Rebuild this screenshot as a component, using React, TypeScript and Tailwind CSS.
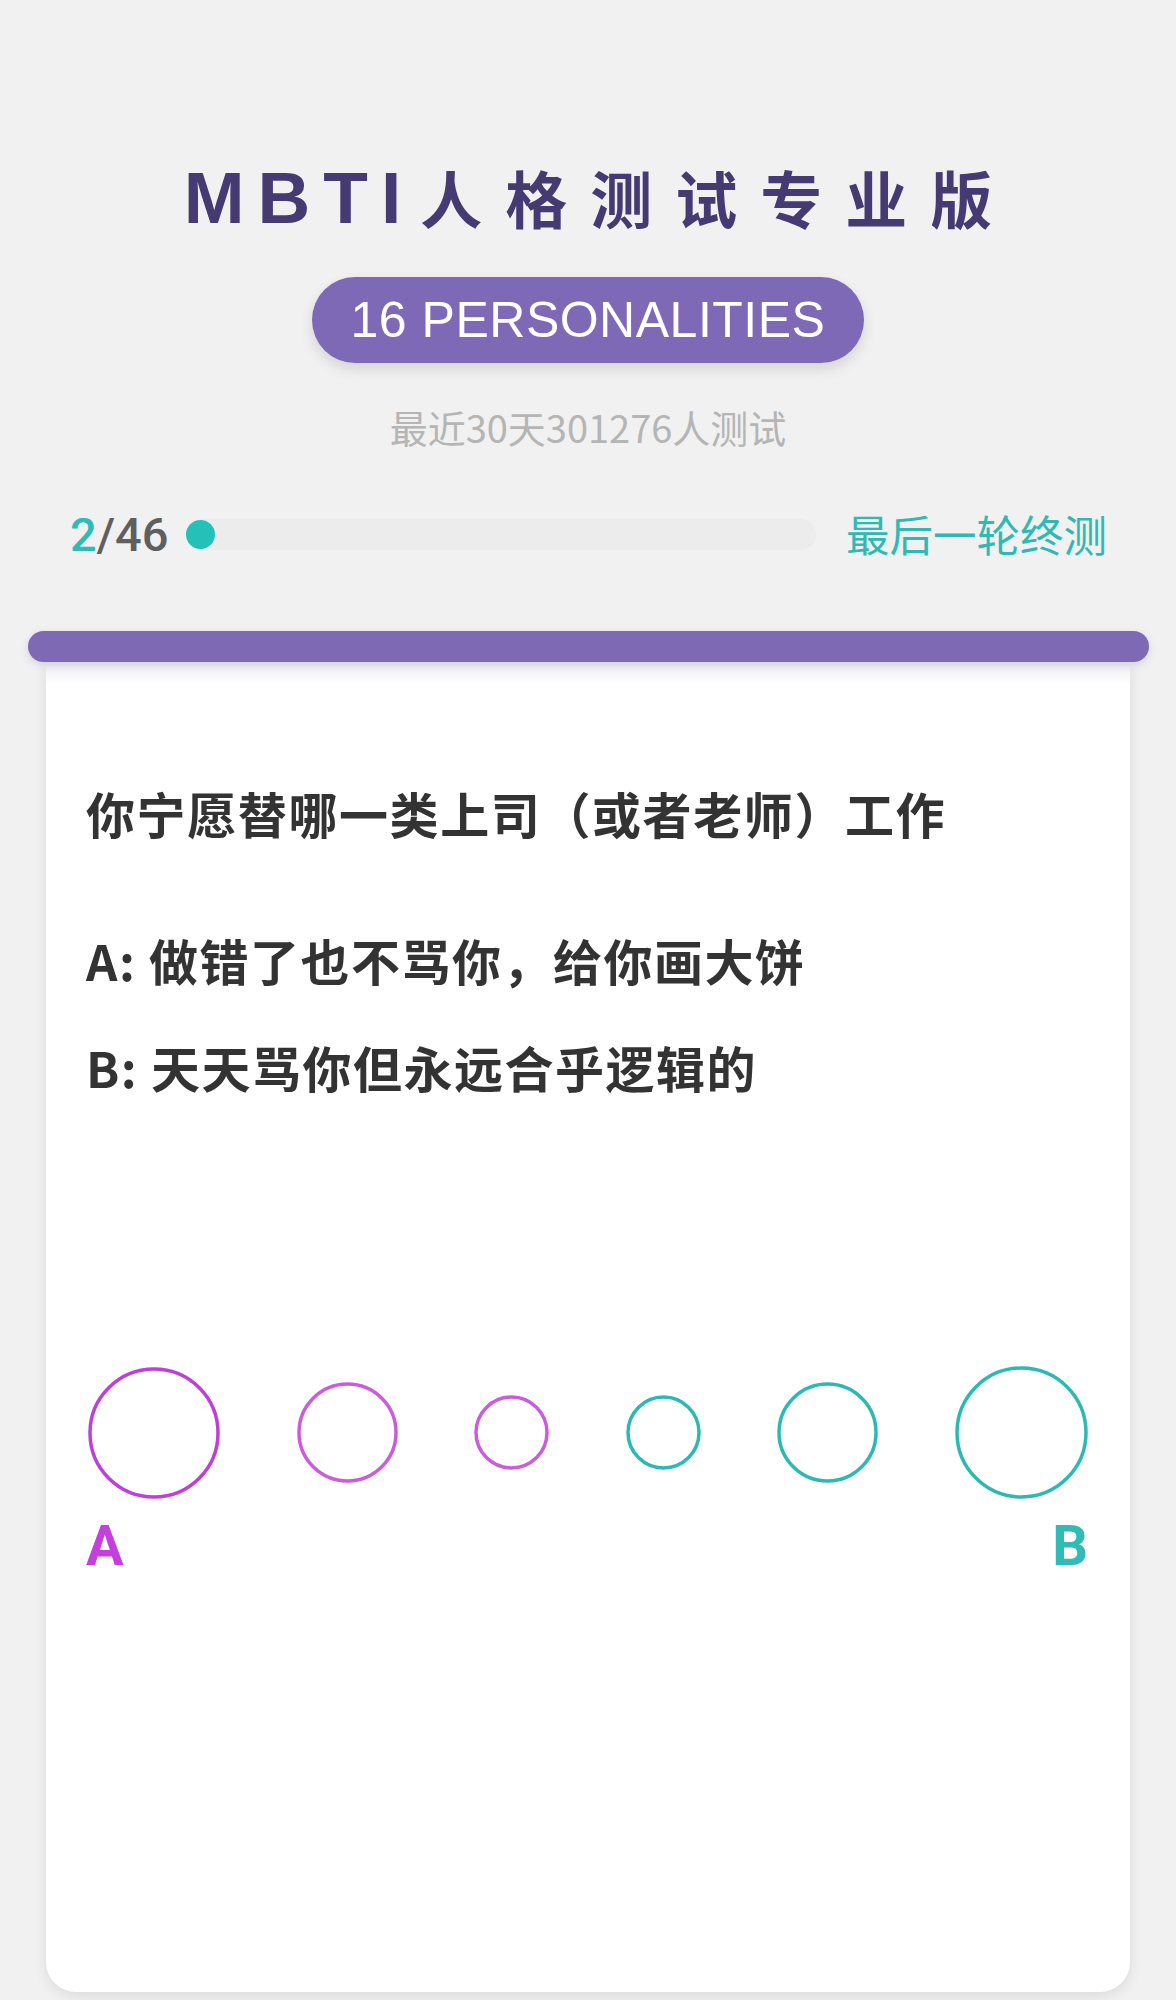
const circles = [
  { size: 132, color: "#bf3fd9" },
  { size: 101, color: "#c95ddc" },
  { size: 75, color: "#c95ddc" },
  { size: 75, color: "#2bbab3" },
  { size: 101, color: "#2bbab3" },
  { size: 133, color: "#2bbab3" },
];

function Ring({ size, color }: { size: number; color: string }) {
  const r = size / 2 - 2;
  return (
    <svg width={size} height={size} viewBox={`0 0 ${size} ${size}`}>
      <circle cx={size / 2} cy={size / 2} r={r} fill="none" stroke={color} strokeWidth={3.5} />
    </svg>
  );
}

export default function App() {
  return (
    <div className="w-full min-h-[2000px] bg-[#f1f1f1] flex flex-col items-center font-['Noto_Sans_CJK_SC',sans-serif]">
      <h1 className="mt-[166px] h-[62px] flex items-center font-bold text-[#453a72] leading-none">
        <span className="text-[73px] font-['Liberation_Sans',sans-serif] tracking-[13px]">MBTI</span>
        <span className="ml-[6px] text-[62px] tracking-[23px] mr-[-23px]">人格测试专业版</span>
      </h1>
      <div className="mt-[49px] w-[552px] h-[86px] rounded-full bg-[#7e69b7] shadow-[0_6px_14px_rgba(0,0,0,0.12)] flex items-center justify-center">
        <span className="text-white text-[50px] leading-none font-['Liberation_Sans',Arial,sans-serif] tracking-[0.5px]">
          16 PERSONALITIES
        </span>
      </div>
      <div className="mt-[45px] text-[38px] leading-none text-[#b5b5b5]">最近30天301276人测试</div>

      <div className="mt-[65px] w-full h-[46px] pl-[70px] pr-[69px] flex items-center">
        <div className="text-[47px] leading-none font-medium font-['Roboto',sans-serif]">
          <span className="text-[#2ebdb5]">2</span>
          <span className="text-[#5f5f5f]">/46</span>
        </div>
        <div className="relative ml-[18px] w-[630px] h-[31px] rounded-full bg-[#ececec]">
          <div className="absolute left-0 top-[1px] w-[29px] h-[29px] rounded-full bg-[#24c1b8]" />
        </div>
        <div className="ml-auto text-[43.5px] leading-none text-[#2ebab3]">最后一轮终测</div>
      </div>

      <div className="mt-[74px] w-full flex flex-col items-center">
        <div className="relative z-10 w-[1121px] h-[31px] rounded-full bg-[#7e69b5] shadow-[0_3px_8px_rgba(90,70,150,0.18)]" />
        <div className="w-[1084px] h-[1330px] bg-white rounded-b-[30px] shadow-[0_4px_14px_rgba(0,0,0,0.09)] flex flex-col">
          <div className="h-[22px] bg-gradient-to-b from-[#ececf0] to-white" />
          <div className="pl-[40px] pr-[42px] flex flex-col">
            <div className="mt-[104px] text-[49px] leading-none font-bold text-[#333333] tracking-[1.6px]">
              你宁愿替哪一类上司（或者老师）工作
            </div>
            <div className="mt-[98px] text-[49px] leading-none font-bold text-[#333333] tracking-[1.5px]">
              A: 做错了也不骂你，给你画大饼
            </div>
            <div className="mt-[58px] text-[49px] leading-none font-bold text-[#333333] tracking-[1.5px]">
              B: 天天骂你但永远合乎逻辑的
            </div>
            <div className="mt-[275px] pl-[2px] flex items-center justify-between">
              {circles.map((c, i) => (
                <Ring key={i} size={c.size} color={c.color} />
              ))}
            </div>
            <div className="mt-[19px] flex justify-between font-['Roboto',sans-serif] font-bold text-[56px] leading-none">
              <span className="text-[#c43fdc]">A</span>
              <span className="text-[#2ebcb5]">B</span>
            </div>
          </div>
        </div>
      </div>
    </div>
  );
}
